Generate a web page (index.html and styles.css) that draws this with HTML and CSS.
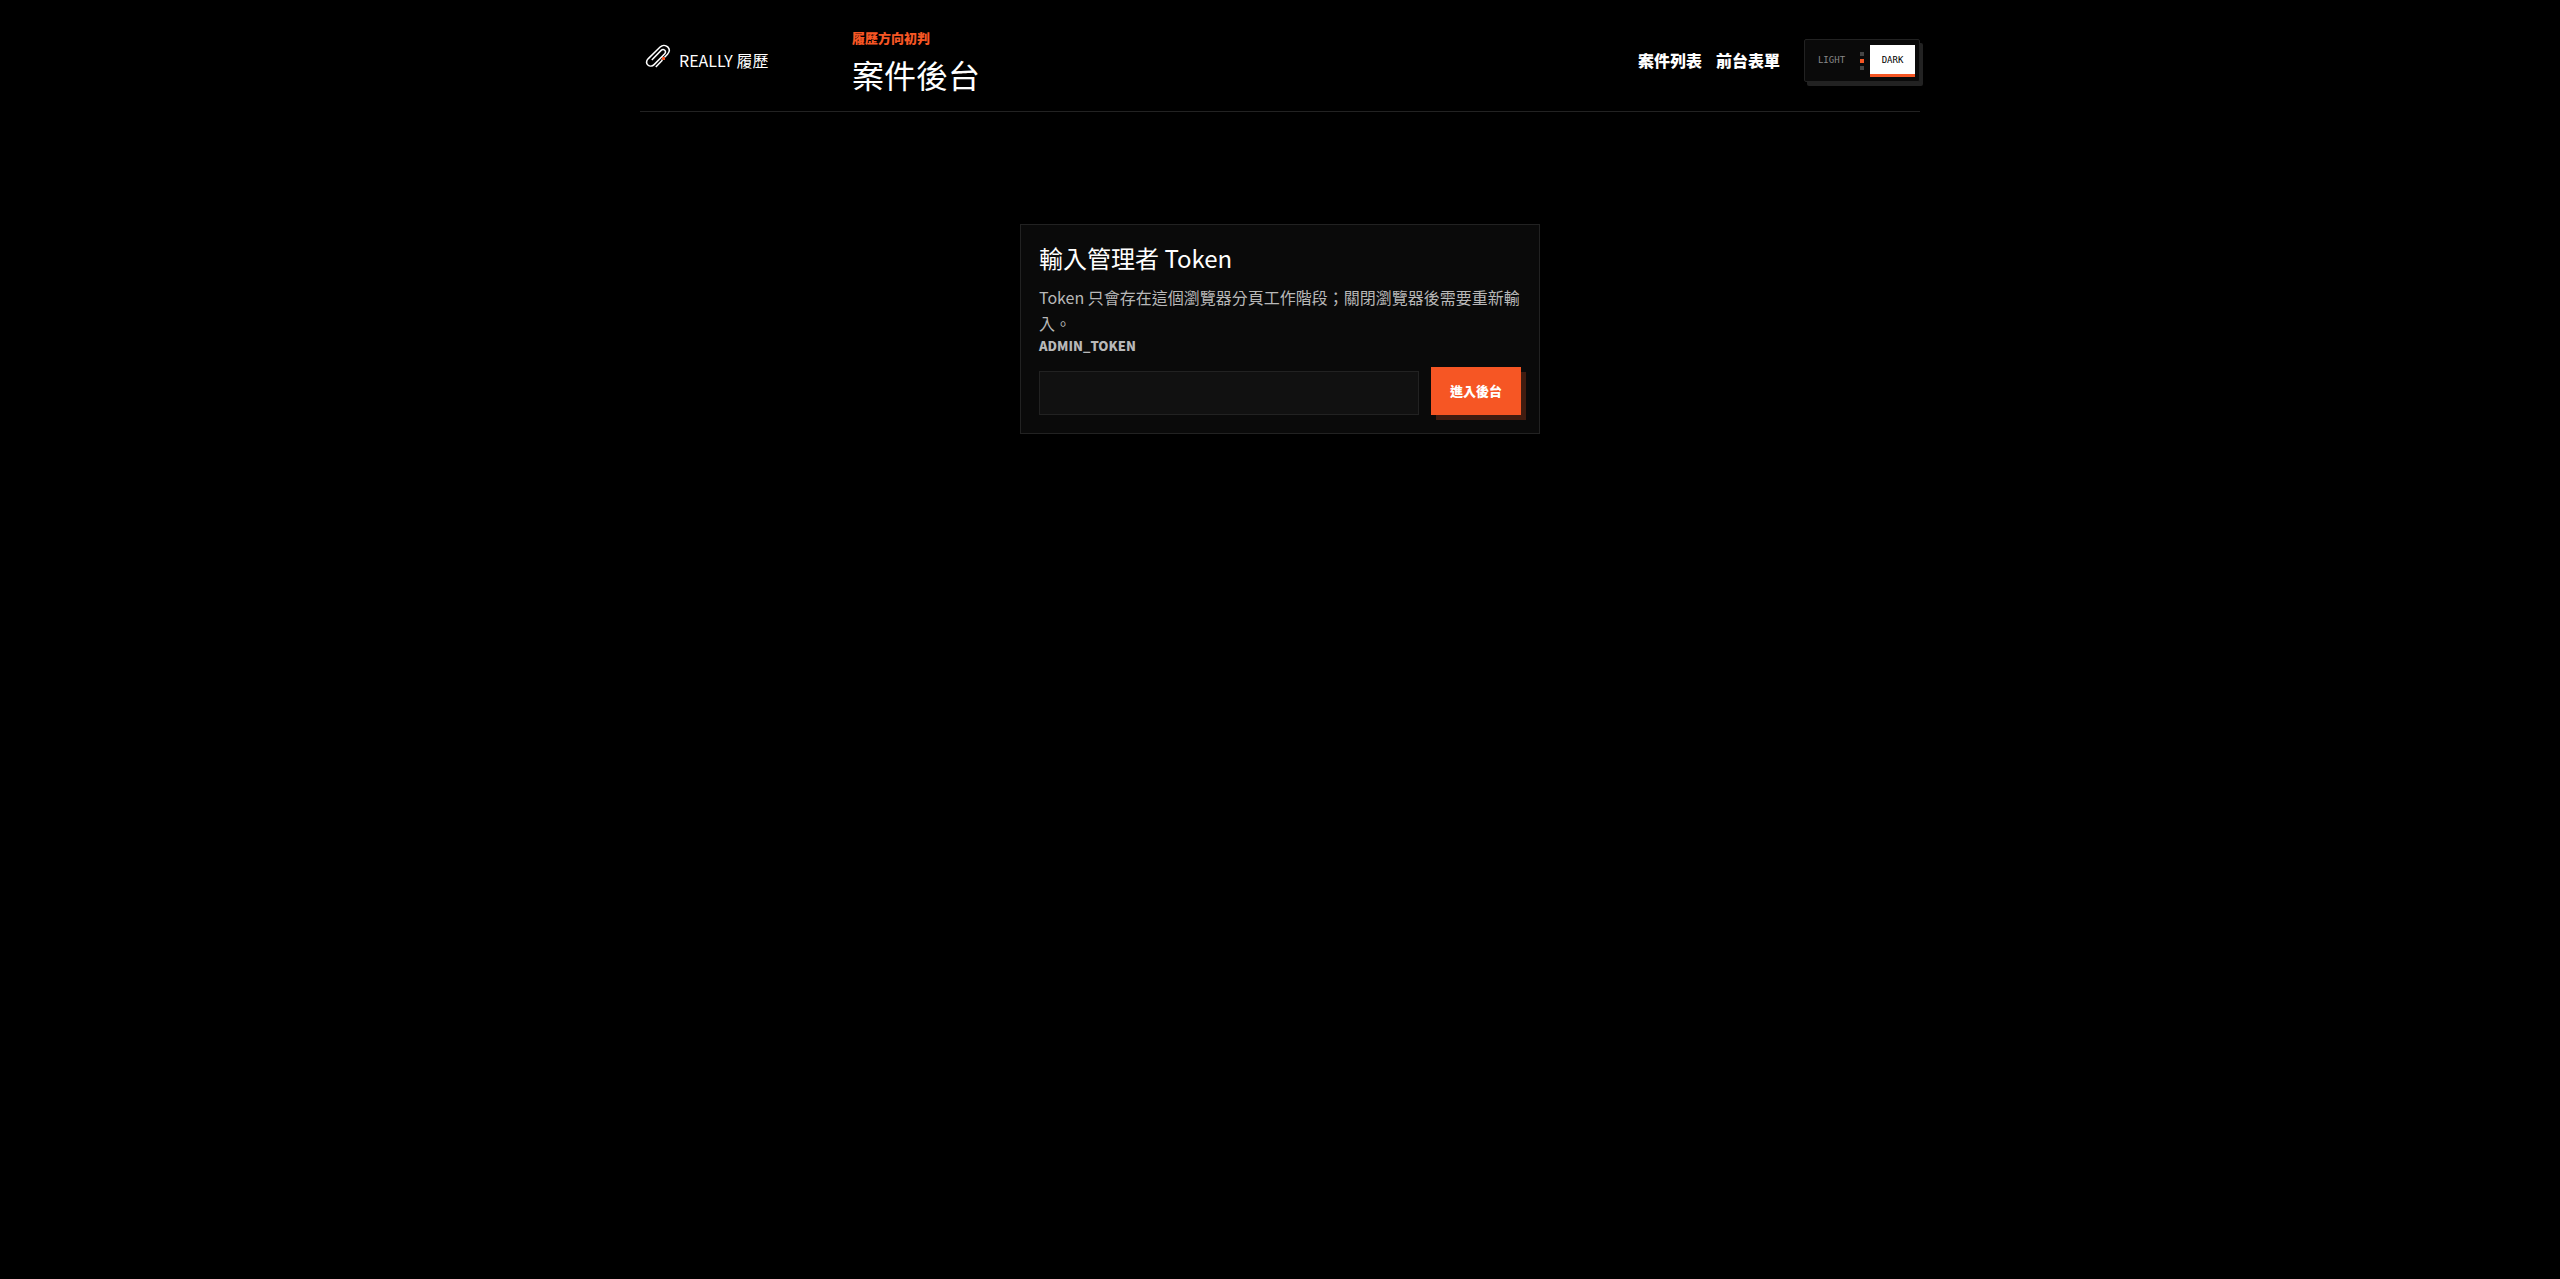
FILE: index.html
```html
<!DOCTYPE html>
<html lang="zh-Hant">
<head>
<meta charset="utf-8">
<meta name="viewport" content="width=device-width, initial-scale=1">
<title>案件後台</title>
<link rel="stylesheet" href="styles.css">
</head>
<body>
<div class="shell">
  <header class="topbar">
    <a class="brand" href="#">
      <svg class="brand-mark" viewBox="0 0 28 28" aria-hidden="true">
        <g fill="none" stroke="currentColor" stroke-width="1.500">
          <path d="M17.800 18.200L23.500 12.200C25.700 9.800 25.600 6.800 23.700 4.900C21.500 2.800 18.200 3 16.100 5L4.300 16.600C2.300 18.700 2.200 21.300 3.900 23C5.600 24.600 8.300 24.400 10.100 22.600L20.500 12C21.700 10.700 21.700 9.200 20.700 8.200C19.600 7.200 18.100 7.400 16.900 8.600L7.800 18"/>
          <path d="M11.800 25L18.300 18.200"/>
        </g>
        <path fill="#f65624" d="M18 15h3v3h-3z"/>
      </svg>
      <span>REALLY 履歷</span>
    </a>
    <div class="heading">
      <p class="eyebrow">履歷方向初判</p>
      <h1 class="title">案件後台</h1>
    </div>
    <nav class="nav">
      <a href="#">案件列表</a>
      <a href="#">前台表單</a>
    </nav>
    <div class="theme">
      <button class="theme-option" type="button">LIGHT</button>
      <span class="theme-dots"><i></i><i></i><i></i></span>
      <button class="theme-option theme-active" type="button" aria-pressed="true">DARK</button>
    </div>
  </header>
  <main>
    <form class="card">
      <h2 class="card-title">輸入管理者 Token</h2>
      <p class="card-text">Token 只會存在這個瀏覽器分頁工作階段；關閉瀏覽器後需要重新輸入。</p>
      <label class="label" for="token">ADMIN_TOKEN</label>
      <div class="row">
        <input class="input" id="token" type="password">
        <button class="submit" type="button">進入後台</button>
      </div>
    </form>
  </main>
</div>
</body>
</html>
```
FILE: styles.css
```css
* { box-sizing: border-box; }

body {
  margin: 0;
  background: #000;
  color: #fff;
  font-family: "Noto Sans CJK TC", "Noto Sans", sans-serif;
  font-size: 16px;
}

a { color: inherit; text-decoration: none; }
h1, h2, p { margin: 0; font-weight: 400; }
button, input { font: inherit; border-radius: 0; }

.shell {
  width: 100%;
  max-width: 1280px;
  margin: 0 auto;
}

.topbar {
  display: flex;
  align-items: center;
  min-height: 112px;
  padding: 20px 0 10px;
  border-bottom: 1px solid #222;
}

.brand {
  display: flex;
  align-items: center;
  gap: 7px;
  width: 212px;
  padding: 0 4px 2px;
  line-height: 24px;
}

.brand-mark {
  width: 28px;
  height: 28px;
  margin-bottom: 8px;
}

.heading { flex: 1; }

.eyebrow {
  color: #f65624;
  font-size: 13px;
  font-weight: 900;
  line-height: 20px;
}

.title {
  margin-top: 7px;
  padding-bottom: 1px;
  font-size: 32px;
  line-height: 38px;
}

.nav {
  display: flex;
  gap: 14px;
  margin-right: 24px;
  padding-bottom: 2px;
  font-weight: 900;
  line-height: 24px;
}

.theme {
  display: flex;
  align-items: center;
  gap: 6px;
  height: 43px;
  width: 116px;
  padding: 4px;
  border: 1px solid #222;
  border-radius: 2px;
  background: #0a0a0a;
  box-shadow: 3px 4px 0 #222;
}

.theme-option {
  flex: 1;
  height: 32px;
  padding: 2px 0 0;
  border: 0;
  border-bottom: 3px solid transparent;
  background: transparent;
  color: #888;
  font-family: "DejaVu Sans Mono", monospace;
  font-size: 9px;
}

.theme-active {
  border-color: #f65624;
  background: #fff;
  color: #000;
}

.theme-dots { display: grid; gap: 3px; }
.theme-dots i { width: 4px; height: 4px; background: #444; }
.theme-dots i:nth-child(2) { background: #f65624; }

.card {
  max-width: 520px;
  margin: 112px auto 0;
  padding: 18px;
  border: 1px solid #222;
  background: #0a0a0a;
}

.card-title { font-size: 24px; line-height: 30px; }

.card-text {
  margin-top: 11px;
  color: #b8b8b8;
  line-height: 26px;
}

.label {
  display: block;
  color: #b8b8b8;
  font-size: 13px;
  font-weight: 900;
  line-height: 20px;
}

.row {
  display: flex;
  align-items: end;
  gap: 12px;
  margin-top: 11px;
}

.input {
  flex: 1;
  min-width: 0;
  height: 44px;
  padding: 0 12px;
  border: 1px solid #222;
  background: #111;
  color: #fff;
}

.submit {
  height: 48px;
  padding: 0 18px 2px;
  border: 1px solid #f65624;
  background: #f65624;
  box-shadow: 5px 5px 0 #401c10;
  color: #fff;
  font-size: 13px;
  font-weight: 900;
}
```
